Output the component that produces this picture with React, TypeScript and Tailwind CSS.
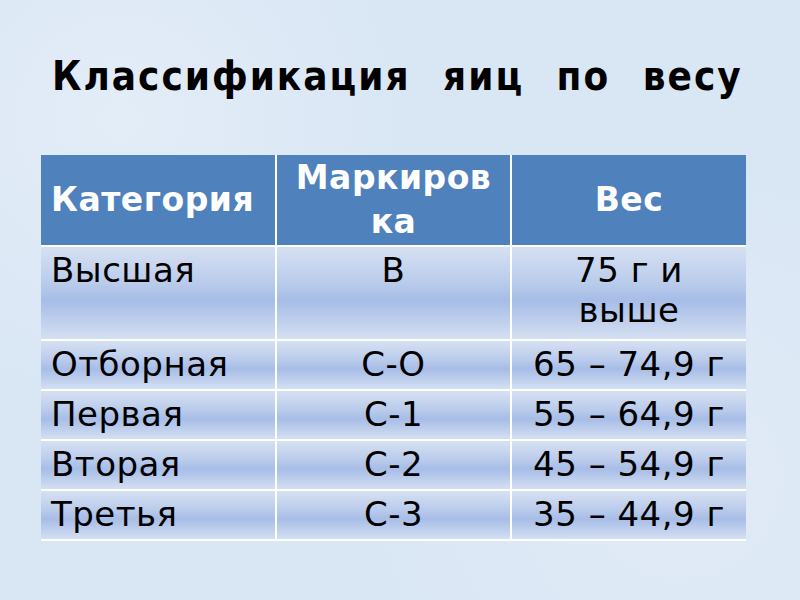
const rows = [
  { cat: "Высшая", mark: "В", weight: ["75 г и", "выше"], tall: true },
  { cat: "Отборная", mark: "С-О", weight: ["65 – 74,9 г"] },
  { cat: "Первая", mark: "С-1", weight: ["55 – 64,9 г"] },
  { cat: "Вторая", mark: "С-2", weight: ["45 – 54,9 г"] },
  { cat: "Третья", mark: "С-3", weight: ["35 – 44,9 г"] },
];

const cellBg =
  "bg-[linear-gradient(to_bottom,#d6e0f2_0%,#b9cbeb_40%,#a7bde7_58%,#d4dff2_100%)]";

export default function App() {
  return (
    <div
      className="w-[800px] h-[600px] overflow-hidden bg-[#d9e6f4] bg-[radial-gradient(circle_at_15%_20%,#e3edf8_0,transparent_35%),radial-gradient(circle_at_85%_80%,#e1ebf7_0,transparent_40%)]"
      style={{ fontFamily: '"DejaVu Sans", Verdana, sans-serif' }}
    >
      {/* Title */}
      <div className="pt-[56px] pl-[52px] h-[155px]">
        <h1
          className="text-[40px] font-bold text-black leading-none tracking-[2px] [word-spacing:18px] whitespace-nowrap"
          style={{ fontFamily: '"DejaVu Sans Condensed", "DejaVu Sans", sans-serif' }}
        >
          Классификация яиц по весу
        </h1>
      </div>

      {/* Table */}
      <table className="ml-[41px] w-[705px] table-fixed border-collapse">
        <colgroup>
          <col className="w-[235px]" />
          <col className="w-[235px]" />
          <col className="w-[235px]" />
        </colgroup>
        <thead>
          <tr className="h-[91px] bg-[#4f81bd] text-white text-[33px] font-bold leading-[44px] tracking-[0.5px]">
            <th className="border-2 border-white border-t-0 border-l-0 text-left pl-[10px] font-bold whitespace-nowrap">
              Категория
            </th>
            <th className="border-2 border-white border-t-0 px-[6px] text-center font-bold">
              Маркиров ка
            </th>
            <th className="border-2 border-white border-t-0 border-r-0 text-center font-bold">
              Вес
            </th>
          </tr>
        </thead>
        <tbody className="text-[34px] text-black leading-[40px] tracking-[0.5px]">
          {rows.map((r) => (
            <tr key={r.cat} className={r.tall ? "h-[94px]" : "h-[50px]"}>
              <td className={`${cellBg} border-2 border-white border-l-0 pl-[10px] align-top pt-[3px] whitespace-nowrap`}>
                {r.cat}
              </td>
              <td className={`${cellBg} border-2 border-white text-center align-top pt-[3px] whitespace-nowrap`}>
                {r.mark}
              </td>
              <td className={`${cellBg} border-2 border-white border-r-0 text-center align-top pt-[3px] whitespace-nowrap`}>
                {r.weight.map((w) => (
                  <div key={w}>{w}</div>
                ))}
              </td>
            </tr>
          ))}
        </tbody>
      </table>
    </div>
  );
}
